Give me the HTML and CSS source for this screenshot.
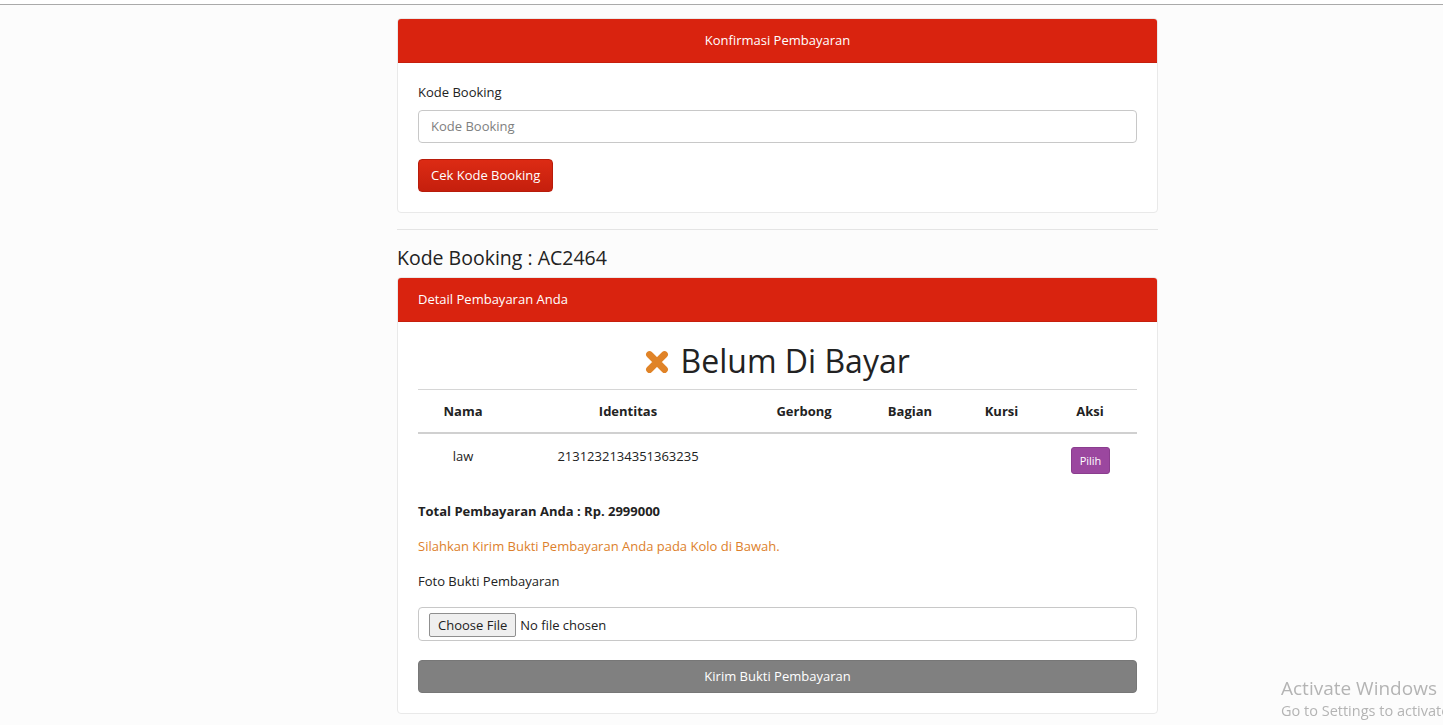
FILE: index.html
```html
<!DOCTYPE html>
<html lang="id">
<head>
<meta charset="utf-8">
<title>Konfirmasi Pembayaran</title>
<link rel="stylesheet" href="styles.css">
</head>
<body>
<div class="topbar"></div>
<main class="container">
  <section class="card">
    <div class="card-header center">Konfirmasi Pembayaran</div>
    <div class="card-body">
      <label class="label" for="kode">Kode Booking</label>
      <input class="input" id="kode" type="text" placeholder="Kode Booking">
      <button class="btn btn-red" type="button">Cek Kode Booking</button>
    </div>
  </section>

  <hr class="divider">

  <h4 class="booking-title">Kode Booking : AC2464</h4>

  <section class="card">
    <div class="card-header">Detail Pembayaran Anda</div>
    <div class="card-body">
      <h2 class="status">
        <svg class="status-icon" viewBox="0 0 24 24" width="24" height="24" aria-hidden="true">
          <path d="M4.5 4.5 L19.5 19.5 M19.5 4.5 L4.5 19.5" stroke="#e08327" stroke-width="6.8" stroke-linecap="round" fill="none"/>
        </svg>
        Belum Di Bayar
      </h2>
      <table class="table">
        <thead>
          <tr>
            <th class="c-nama">Nama</th>
            <th class="c-id">Identitas</th>
            <th class="c-gerbong">Gerbong</th>
            <th class="c-bagian">Bagian</th>
            <th class="c-kursi">Kursi</th>
            <th class="c-aksi">Aksi</th>
          </tr>
        </thead>
        <tbody>
          <tr>
            <td>law</td>
            <td>2131232134351363235</td>
            <td></td>
            <td></td>
            <td></td>
            <td><button class="btn-pilih" type="button">Pilih</button></td>
          </tr>
        </tbody>
      </table>
      <p class="total">Total Pembayaran Anda : Rp. 2999000</p>
      <p class="notice">Silahkan Kirim Bukti Pembayaran Anda pada Kolo di Bawah.</p>
      <label class="label foto-label" for="foto">Foto Bukti Pembayaran</label>
      <div class="file-box">
        <input class="file" id="foto" type="file">
      </div>
      <button class="btn btn-gray" type="button">Kirim Bukti Pembayaran</button>
    </div>
  </section>
</main>
<div class="watermark">
  <div class="wm-title">Activate Windows</div>
  <div class="wm-sub">Go to Settings to activate Windows.</div>
</div>
</body>
</html>
```

FILE: styles.css
```css
html {
  overflow: hidden;
}
body {
  margin: 0;
  background: #fcfcfc;
  font-family: "Open Sans", "Noto Sans", sans-serif;
  font-size: 13px;
  line-height: 1.42857;
  color: #222;
}
.topbar {
  height: 4px;
  background: #fff;
  border-bottom: 1px solid #aaaaaa;
}
.container {
  width: 761px;
  margin: 13px 0 0 397px;
}
.card {
  background: #fff;
  border: 1px solid #e9e9e9;
  border-radius: 4px;
  overflow: hidden;
}
.card-header {
  background: #d9230f;
  color: #fff;
  height: 43px;
  line-height: 43px;
  padding: 0 20px;
  border-bottom: 1px solid #c61f0d;
}
.card-header.center {
  text-align: center;
}
.card-body {
  padding: 20px 20px 20px;
  display: flex;
  flex-direction: column;
  align-items: flex-start;
}
.label {
  display: block;
  margin-bottom: 8px;
  color: #222;
}
.input {
  box-sizing: border-box;
  width: 100%;
  height: 33px;
  border: 1px solid #c8c8c8;
  border-radius: 4px;
  padding: 6px 12px;
  font: inherit;
  color: #555;
  margin: 0 0 16px;
}
.input::placeholder {
  color: #808080;
}
.btn {
  font: inherit;
  color: #fff;
  border-radius: 4px;
  cursor: pointer;
}
.btn-red {
  height: 33px;
  padding: 0 12px;
  background: linear-gradient(#dc2b14, #c51f0d);
  border: 1px solid #b81c0b;
}
.divider {
  border: 0;
  border-top: 1px solid #e4e4e4;
  margin: 16px 0 0;
}
.booking-title {
  font-size: 19.5px;
  font-weight: 400;
  line-height: 22px;
  margin: 17px 0 8px;
  color: #222;
}
.status {
  align-self: stretch;
  text-align: center;
  font-size: 32px;
  font-weight: 400;
  line-height: 35px;
  margin: 1px 0 11px;
  color: #222;
}
.status-icon {
  vertical-align: -1px;
  margin-right: 3px;
}
.table {
  width: 100%;
  border-collapse: collapse;
  border-top: 1px solid #d6d6d6;
  table-layout: fixed;
}
.table th {
  font-weight: 700;
  padding: 12px 8px;
  text-align: center;
  border-bottom: 2px solid #d0d0d0;
}
.table td {
  padding: 13px 8px 12px;
  text-align: center;
  vertical-align: top;
}
.c-nama { width: 74px; }
.c-id { width: 224px; }
.c-gerbong { width: 96px; }
.c-bagian { width: 84px; }
.c-kursi { width: 67px; }
.c-aksi { width: 78px; }
.btn-pilih {
  font: inherit;
  font-size: 11px;
  color: #fff;
  background: #9b479f;
  border: 1px solid #8a3d8e;
  border-radius: 3px;
  height: 27px;
  padding: 0 8px;
  margin-left: 1px;
}
.total {
  font-weight: 700;
  margin: 16px 0 0;
}
.notice {
  color: #dd7f2c;
  margin: 16px 0 0;
}
.foto-label {
  margin: 17px 0 16px;
}
.file-box {
  box-sizing: border-box;
  width: 100%;
  height: 34px;
  border: 1px solid #c8c8c8;
  border-radius: 4px;
  padding: 5px 10px;
  margin-bottom: 19px;
}
.file {
  font: inherit;
  color: #222;
}
.file::file-selector-button {
  font: inherit;
  color: #222;
  background: #efefef;
  border: 1px solid #8f8f8f;
  border-radius: 2px;
  padding: 1px 8px;
  height: 24px;
  margin-right: 4px;
}
.btn-gray {
  width: 100%;
  height: 33px;
  background: #808080;
  border: 1px solid #777;
}
.watermark {
  position: fixed;
  left: 1281px;
  top: 677px;
  white-space: nowrap;
  color: rgba(120, 120, 120, 0.55);
  font-family: "Open Sans", "Noto Sans", sans-serif;
  pointer-events: none;
}
.wm-title {
  font-size: 19px;
  line-height: 23px;
}
.wm-sub {
  font-size: 14.5px;
  line-height: 22px;
}
```
